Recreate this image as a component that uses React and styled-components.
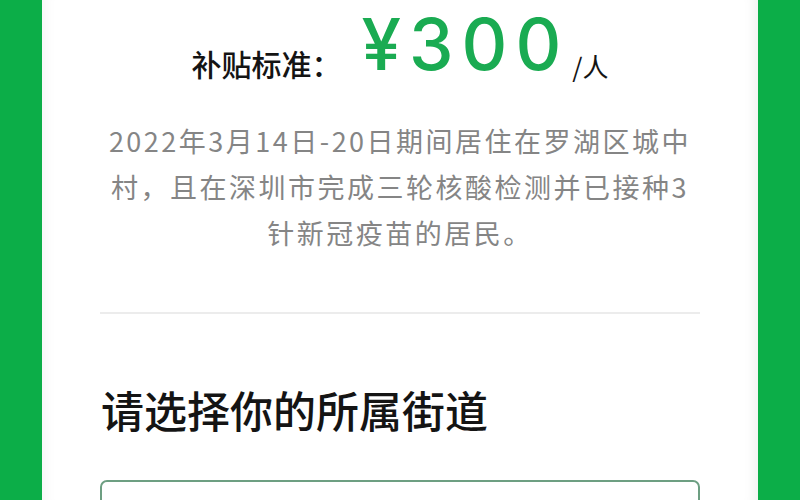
import React from 'react';
import styled, { createGlobalStyle } from 'styled-components';

const GlobalStyle = createGlobalStyle`
  html, body {
    margin: 0;
    padding: 0;
    background: #0cae48;
  }
  body {
    font-family: "Noto Sans CJK SC", "Noto Sans", sans-serif;
  }
`;

const Page = styled.div`
  display: flex;
  justify-content: center;
  height: 500px;
  overflow: hidden;
  padding: 0 42px;
  background: #0cae48;
`;

const Card = styled.div`
  flex: 1;
  display: flex;
  flex-direction: column;
  align-items: center;
  background: #ffffff;
  box-shadow: inset 14px 0 14px -12px rgba(0, 0, 0, 0.05),
    inset -14px 0 14px -12px rgba(0, 0, 0, 0.07);
`;

const Content = styled.div`
  width: 600px;
  display: flex;
  flex-direction: column;
`;

const PriceRow = styled.div`
  margin-top: 4px;
  height: 84px;
  line-height: 80px;
  text-align: center;
  white-space: nowrap;
`;

const Label = styled.span`
  font-size: 30px;
  font-weight: 500;
  color: #141414;
  vertical-align: -6px;
  margin-right: 20px;
`;

const Amount = styled.span`
  font-family: Inter, Roboto, "Liberation Sans", sans-serif;
  font-size: 71px;
  font-weight: 500;
  letter-spacing: 8px;
  color: #1aab52;
`;

const Unit = styled.span`
  font-size: 26px;
  color: #141414;
  vertical-align: -7px;
  margin-left: 3px;
`;

const Note = styled.p`
  margin: 30px 0 0;
  font-size: 27px;
  letter-spacing: 2.5px;
  line-height: 46px;
  color: #858585;
  text-align: center;
  white-space: nowrap;
`;

const Divider = styled.hr`
  margin: 56px 0 0;
  border: none;
  height: 2px;
  background: #ececec;
`;

const Heading = styled.h2`
  margin: 70px 0 0 1px;
  font-size: 43px;
  font-weight: 500;
  line-height: 50px;
  color: #141414;
`;

const SelectBox = styled.div`
  margin-top: 46px;
  height: 80px;
  border: 2px solid #6d9f82;
  border-radius: 7px;
  background: #ffffff;
`;

export default function App() {
  return (
    <>
      <GlobalStyle />
      <Page>
        <Card>
          <Content>
            <PriceRow>
              <Label>补贴标准：</Label>
              <Amount>¥300</Amount>
              <Unit>/人</Unit>
            </PriceRow>
            <Note>
              2022年3月14日-20日期间居住在罗湖区城中
              <br />
              村，且在深圳市完成三轮核酸检测并已接种3
              <br />
              针新冠疫苗的居民。
            </Note>
            <Divider />
            <Heading>请选择你的所属街道</Heading>
            <SelectBox />
          </Content>
        </Card>
      </Page>
    </>
  );
}
